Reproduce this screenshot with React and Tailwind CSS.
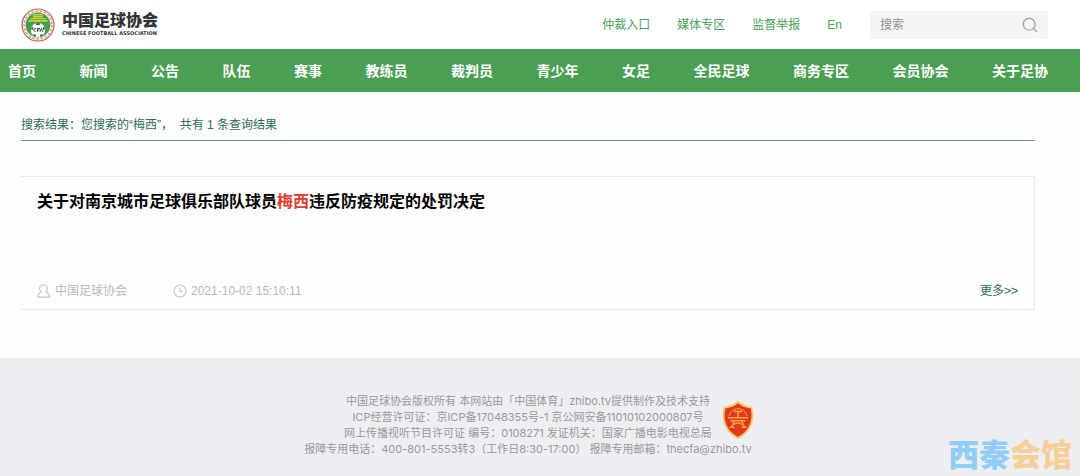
const topLinks = ["仲裁入口", "媒体专区", "监督举报", "En"]

const navItems = [
  "首页",
  "新闻",
  "公告",
  "队伍",
  "赛事",
  "教练员",
  "裁判员",
  "青少年",
  "女足",
  "全民足球",
  "商务专区",
  "会员协会",
  "关于足协",
]

function Emblem() {
  return (
    <svg viewBox="0 0 34 34" className="h-[34px] w-[34px]" aria-hidden="true">
      <circle cx="17" cy="17" r="16" fill="#fbf3ec" stroke="#b5645a" strokeWidth="1.2" />
      <circle cx="17" cy="17" r="14" fill="none" stroke="#d39a90" strokeWidth="1.6" strokeDasharray="2.4 1.8" />
      <circle cx="17" cy="17" r="12.4" fill="#45a04c" />
      {/* gate tower */}
      <path d="M11 7.500l1.500-1.500h9l1.500 1.500zM12 8h10v1.500h-10zM8.500 11.200l1.800-1.300h13.400l1.800 1.300zM7.500 12h19v1.800h-19z" fill="#c9d63a" />
      {/* football */}
      <circle cx="17" cy="22" r="7.200" fill="#fff" />
      <path d="M14.500 15.600l2.500-.6 2.500.6-1 1.500h-3zM10.200 20l1.700-1.200.4 1.800-1.500 1.900zM23.800 20l-1.700-1.200-.4 1.800 1.500 1.900zM12 26.600l2-.6 1.200 2.300-1 .4zM22 26.600l-2-.6-1.200 2.300 1 .4z" fill="#3c5247" />
      <path d="M15.200 20.400c-2.600-.9-3.600 3.500-.6 3M19 20.400h-2.400v3.400M16.600 21.900h1.900M19 23.800l1.400-3.400 1.400 3.400" fill="none" stroke="#30463c" strokeWidth="1" />
    </svg>
  )
}

function SearchIcon() {
  return (
    <svg viewBox="0 0 16 16" className="h-4 w-4" fill="none" stroke="#a6a9ab" strokeWidth="1.4" strokeLinecap="round" aria-hidden="true">
      <circle cx="7.2" cy="7.2" r="5.9" />
      <path d="M11.6 11.6l3 2.9" />
    </svg>
  )
}

function UserIcon() {
  return (
    <svg viewBox="0 0 14 14" className="h-3.5 w-3.5" fill="none" stroke="#c8c8c8" strokeWidth="1.2" strokeLinejoin="round" aria-hidden="true">
      <path d="M4.300 8a4 4 0 1 1 4.400 0c2.400.7 3.700 2.300 4 5.200H.8C1.100 10.300 2.200 8.700 4.300 8z" />
    </svg>
  )
}

function ClockIcon() {
  return (
    <svg viewBox="0 0 14 14" className="h-3.5 w-3.5" fill="none" stroke="#c8c8c8" strokeWidth="1.1" aria-hidden="true">
      <circle cx="7" cy="7" r="6" />
      <path d="M6.8 3.2v4.2H10" />
    </svg>
  )
}

function Badge() {
  return (
    <svg viewBox="0 0 32 38" className="h-[38px] w-8" aria-hidden="true">
      <path d="M16 1c3.500 3.200 8 5 13.500 5.600 2.800 13.400-1.500 24-13.500 30.400C4 30.600-.3 20 2.500 6.600 8 6 12.500 4.200 16 1z" fill="#e03a1e" stroke="#f8c868" strokeWidth="1.800" />
      <g fill="none" stroke="#f9a848" strokeWidth="1.400">
        <path d="M7 15c1.500-4.800 5-7.300 9-7.300s7.500 2.500 9 7.300" strokeWidth="1" />
        <path d="M12 10.500h8M16 10.500v6M6 16.700h20M8.500 19.700h15M12.500 19.700l-3 6.500M19.500 19.700l3 6.500M12 23.500c2.500-1.800 5.500-1.800 8 0M7.500 26.200h5M19.500 26.200h5" />
      </g>
    </svg>
  )
}

function Header() {
  return (
    <header className="flex h-[49px] items-center justify-between bg-white pr-8 pl-[21px]">
      <a href="#" className="flex items-center gap-[7px] text-[#333]">
        <Emblem />
        <span className="flex flex-col pb-[5px]">
          <span className="font-['Noto_Sans_CJK_SC',sans-serif] text-base leading-[22px] font-black">中国足球协会</span>
          <span className="font-['DejaVu_Sans',sans-serif] text-[5px] leading-[6px] font-bold">CHINESE FOOTBALL ASSOCIATION</span>
        </span>
      </a>

      <div className="flex items-center gap-7">
        <nav className="flex gap-[27px] text-xs text-[#4a9f59]">
          {topLinks.map((link) => (
            <a key={link} href="#">
              {link}
            </a>
          ))}
        </nav>
        <form className="flex h-7 w-[178px] items-center bg-[#f4f5f6] px-[10px]">
          <input
            type="text"
            aria-label="搜索"
            placeholder="搜索"
            className="min-w-0 flex-1 bg-transparent text-xs outline-none placeholder:text-[#929292]"
          />
          <button type="button" aria-label="提交搜索">
            <SearchIcon />
          </button>
        </form>
      </div>
    </header>
  )
}

function Result() {
  return (
    <article className="mt-[35px] flex h-[134px] flex-col justify-between border-y border-r border-[#e8e9ea] px-4 pt-[13px] pb-[9px]">
      <h2 className="text-base leading-6 font-bold text-black">
        <a href="#">
          关于对南京城市足球俱乐部队球员<span className="text-[#df3b2c]">梅西</span>违反防疫规定的处罚决定
        </a>
      </h2>
      <div className="flex items-center text-xs leading-[18px] text-[#b9b9b9]">
        <span className="flex items-center gap-1">
          <UserIcon />
          中国足球协会
        </span>
        <time className="ml-[46px] flex items-center gap-1">
          <ClockIcon />
          2021-10-02 15:10:11
        </time>
        <a href="#" className="ml-auto text-[#2b6b4f]">
          更多&gt;&gt;
        </a>
      </div>
    </article>
  )
}

function Footer() {
  return (
    <footer className="relative flex flex-1 justify-center bg-[#edeef2] pt-[35px] pr-6 font-['Inter','Noto_Sans_CJK_SC',sans-serif] text-[11px] leading-4 text-[#999]">
      <div className="relative text-center">
        <p>中国足球协会版权所有 本网站由「中国体育」zhibo.tv提供制作及技术支持</p>
        <p>ICP经营许可证：京ICP备17048355号-1 京公网安备11010102000807号</p>
        <p>网上传播视听节目许可证 编号：0108271 发证机关：国家广播电影电视总局</p>
        <p>报障专用电话：400-801-5553转3（工作日8:30-17:00） 报障专用邮箱：thecfa@zhibo.tv</p>
        <span className="absolute top-2 right-[-2px]">
          <Badge />
        </span>
      </div>
      <div className="absolute right-2 bottom-1 font-['Noto_Sans_CJK_SC',sans-serif] text-[31px] leading-[38px] font-black">
        <span className="text-[#92ccf8]">西秦</span>
        <span className="text-[#f6cf98]">会馆</span>
      </div>
    </footer>
  )
}

function App() {
  return (
    <div lang="zh-CN" className="flex min-h-screen flex-col bg-[#fdfdfd] font-['Liberation_Sans','Noto_Sans_CJK_SC',sans-serif]">
      <Header />
      <nav className="flex h-[43px] items-center justify-between bg-[#4a9f54] pr-8 pl-2 text-sm font-bold text-white">
        {navItems.map((item) => (
          <a key={item} href="#">
            {item}
          </a>
        ))}
      </nav>
      <main className="mr-[45px] ml-[21px] pt-[23px] pb-12">
        <p className="border-b border-[#5f9584] pb-[5px] text-xs leading-5 text-[#2d6e55]">
          搜索结果：您搜索的“梅西”，&nbsp; 共有 1 条查询结果
        </p>
        <Result />
      </main>
      <Footer />
    </div>
  )
}

export default App
